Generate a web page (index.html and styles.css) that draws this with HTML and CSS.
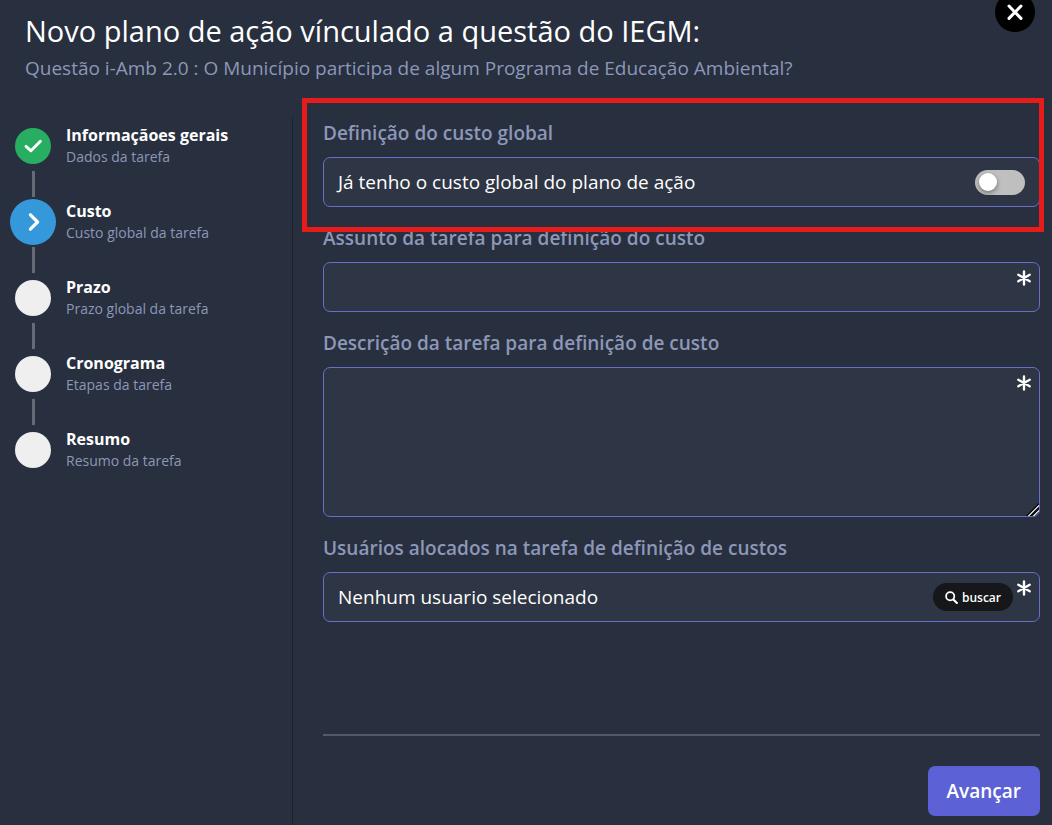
FILE: index.html
```html
<!DOCTYPE html>
<html lang="pt-BR">

<head>
  <meta charset="UTF-8">
  <meta name="viewport" content="width=device-width, initial-scale=1.0">
  <title>Novo plano de ação</title>
  <link rel="stylesheet" href="styles.css">
</head>

<body>
  <svg width="0" height="0" class="sprite" aria-hidden="true">
    <symbol id="asterisk" viewBox="0 0 16 16">
      <path d="M8 1.4v13.2M2.3 4.7l11.4 6.6M13.7 4.7L2.3 11.3" fill="none" stroke="#fff" stroke-width="2.4" stroke-linecap="round" />
    </symbol>
  </svg>
  <div class="modal">
    <header class="modal-header">
      <div class="titles">
        <h1>Novo plano de ação vínculado a questão do IEGM:</h1>
        <p>Questão i-Amb 2.0 : O Município participa de algum Programa de Educação Ambiental?</p>
      </div>
      <button class="btn-close" type="button" aria-label="Fechar">
        <svg width="18" height="18" viewBox="0 0 18 18"><path d="M3 3l12 12.4M15 3L3 15.4" fill="none" stroke="#fff" stroke-width="3" stroke-linecap="round" /></svg>
      </button>
    </header>

    <div class="modal-body">
      <ol class="steps">
        <li class="step done">
          <span class="icon">
            <svg width="20" height="16" viewBox="0 0 20 16"><path d="M3 8.4l5 4.4L17.4 3.2" fill="none" stroke="#fff" stroke-width="2.9" stroke-linecap="round" stroke-linejoin="round" /></svg>
          </span>
          <div class="step-text">
            <strong>Informaçãoes gerais</strong>
            <span>Dados da tarefa</span>
          </div>
        </li>
        <li class="step active">
          <span class="icon">
            <svg width="14" height="20" viewBox="0 0 14 20"><path d="M4.4 2.8L11.6 10l-7.2 7.2" fill="none" stroke="#fff" stroke-width="3.2" stroke-linecap="round" stroke-linejoin="round" /></svg>
          </span>
          <div class="step-text">
            <strong>Custo</strong>
            <span>Custo global da tarefa</span>
          </div>
        </li>
        <li class="step">
          <span class="icon"></span>
          <div class="step-text">
            <strong>Prazo</strong>
            <span>Prazo global da tarefa</span>
          </div>
        </li>
        <li class="step">
          <span class="icon"></span>
          <div class="step-text">
            <strong>Cronograma</strong>
            <span>Etapas da tarefa</span>
          </div>
        </li>
        <li class="step">
          <span class="icon"></span>
          <div class="step-text">
            <strong>Resumo</strong>
            <span>Resumo da tarefa</span>
          </div>
        </li>
      </ol>

      <form class="form">
        <div class="field highlight">
          <span class="label">Definição do custo global</span>
          <div class="control">
            <label for="custo-global">Já tenho o custo global do plano de ação</label>
            <input class="switch" type="checkbox" id="custo-global">
          </div>
        </div>
        <div class="field">
          <label class="label" for="assunto">Assunto da tarefa para definição do custo</label>
          <div class="required">
            <input class="control" type="text" id="assunto">
            <svg class="mark"><use href="#asterisk" /></svg>
          </div>
        </div>
        <div class="field">
          <label class="label" for="descricao">Descrição da tarefa para definição de custo</label>
          <div class="required">
            <textarea class="control" id="descricao"></textarea>
            <svg class="mark"><use href="#asterisk" /></svg>
          </div>
        </div>
        <div class="field">
          <span class="label">Usuários alocados na tarefa de definição de custos</span>
          <div class="control users required">
            <span>Nenhum usuario selecionado</span>
            <button class="btn-search" type="button">
              <svg width="13" height="13" viewBox="0 0 13 13"><circle cx="5.2" cy="5.2" r="4.1" fill="none" stroke="#fff" stroke-width="1.8" /><path d="M8.4 8.4l3.5 3.5" stroke="#fff" stroke-width="2.1" stroke-linecap="round" /></svg>
              buscar
            </button>
            <svg class="mark"><use href="#asterisk" /></svg>
          </div>
        </div>
        <footer class="form-footer">
          <button class="btn-next" type="button">Avançar</button>
        </footer>
      </form>
    </div>
  </div>
</body>

</html>
```
FILE: styles.css
```css
* {
  box-sizing: border-box;
  padding: 0;
  margin: 0;
}

body {
  background-color: #282f3e;
  color: #fff;
  font-family: "Segoe UI", "Open Sans", "Noto Sans", sans-serif;
  font-size: 19px;
}

button,
input,
textarea {
  font-family: inherit;
}

button {
  border: none;
  color: #fff;
  cursor: pointer;
}

.sprite {
  position: absolute;
}

.modal {
  min-height: 100vh;
  display: flex;
  flex-direction: column;
}

.modal-header {
  display: flex;
  justify-content: space-between;
  align-items: flex-start;
  padding: 10px 17px 0 25px;
}

.modal-header h1 {
  font-size: 29px;
  font-weight: 400;
  line-height: 42px;
}

.modal-header p {
  color: #8d97b8;
  line-height: 32px;
}

.btn-close {
  display: flex;
  align-items: center;
  justify-content: center;
  flex: none;
  width: 40px;
  height: 40px;
  margin-top: -18px;
  border-radius: 50%;
  background-color: #000;
}

.modal-body {
  flex: 1;
  display: flex;
  padding-top: 33px;
}

/* steps */
.steps {
  flex: none;
  width: 293px;
  padding: 6px 10px;
  border-right: 1px solid #1c212e;
  list-style: none;
}

.step {
  display: grid;
  grid-template-columns: 46px 1fr;
  grid-template-rows: 46px;
  column-gap: 10px;
  align-items: center;
}

.step:not(:last-child)::after {
  content: "";
  width: 3px;
  height: 26px;
  margin: 2px 0;
  justify-self: center;
  background-color: #666a75;
}

.step .icon {
  display: flex;
  align-items: center;
  justify-content: center;
  justify-self: center;
  width: 36px;
  height: 36px;
  border-radius: 50%;
  background-color: #efefef;
}

.step.done .icon {
  background-color: #27ae60;
}

.step.active .icon {
  width: 46px;
  height: 46px;
  background-color: #3498db;
}

.step-text {
  display: flex;
  flex-direction: column;
  font-size: 16px;
  line-height: 21px;
}

.step-text span {
  color: #8d97b8;
  font-size: 14px;
}

/* form */
.form {
  flex: 1;
  min-width: 0;
  display: flex;
  flex-direction: column;
  gap: 17px;
  padding: 2px 12px 9px 30px;
}

.field {
  position: relative;
  display: flex;
  flex-direction: column;
  gap: 10px;
}

.highlight::after {
  content: "";
  position: absolute;
  z-index: 1;
  inset: -21px -4px -25px -21px;
  border: 5px solid #e81b1b;
  pointer-events: none;
}

.label {
  color: #8d97b8;
  font-weight: 600;
  line-height: 28px;
}

.control {
  display: flex;
  align-items: center;
  justify-content: space-between;
  width: 100%;
  height: 50px;
  padding: 0 14px;
  border: 1px solid #6670cb;
  border-radius: 7px;
  background-color: #2e3544;
  color: #fff;
  font-size: 19px;
}

textarea.control {
  display: block;
  height: 150px;
  padding: 10px 14px;
  resize: vertical;
}

textarea::-webkit-resizer {
  background: linear-gradient(135deg, transparent 55%, #111 55% 62%, #ccc 62% 70%, #111 70% 77%, #ccc 77% 84%, transparent 84%);
}

.required {
  position: relative;
}

.mark {
  position: absolute;
  top: 8px;
  right: 8px;
  width: 16px;
  height: 16px;
}

.users {
  padding-right: 26px;
}

.users .mark {
  top: 7px;
  right: 7px;
}

.switch {
  appearance: none;
  width: 50px;
  height: 25px;
  padding: 3px 4px;
  border-radius: 13px;
  background-color: #bfbfbf;
  cursor: pointer;
}

.switch::before {
  content: "";
  display: block;
  width: 18px;
  height: 18px;
  border-radius: 50%;
  background-color: #fff;
  box-shadow: 0 2px 5px rgba(0, 0, 0, 0.4);
}

.switch:checked {
  background-color: #5c61d6;
}

.switch:checked::before {
  margin-left: auto;
}

.btn-search {
  display: flex;
  align-items: center;
  gap: 4px;
  height: 28px;
  padding: 0 12px;
  border-radius: 14px;
  background-color: #15171b;
  font-size: 12px;
  font-weight: 600;
}

.form-footer {
  display: flex;
  justify-content: flex-end;
  margin-top: auto;
  padding-top: 30px;
  border-top: 2px solid #535967;
}

.btn-next {
  height: 50px;
  padding: 0 19px;
  border-radius: 7px;
  background-color: #5c61d6;
  font-size: 19px;
  font-weight: 600;
}
```
